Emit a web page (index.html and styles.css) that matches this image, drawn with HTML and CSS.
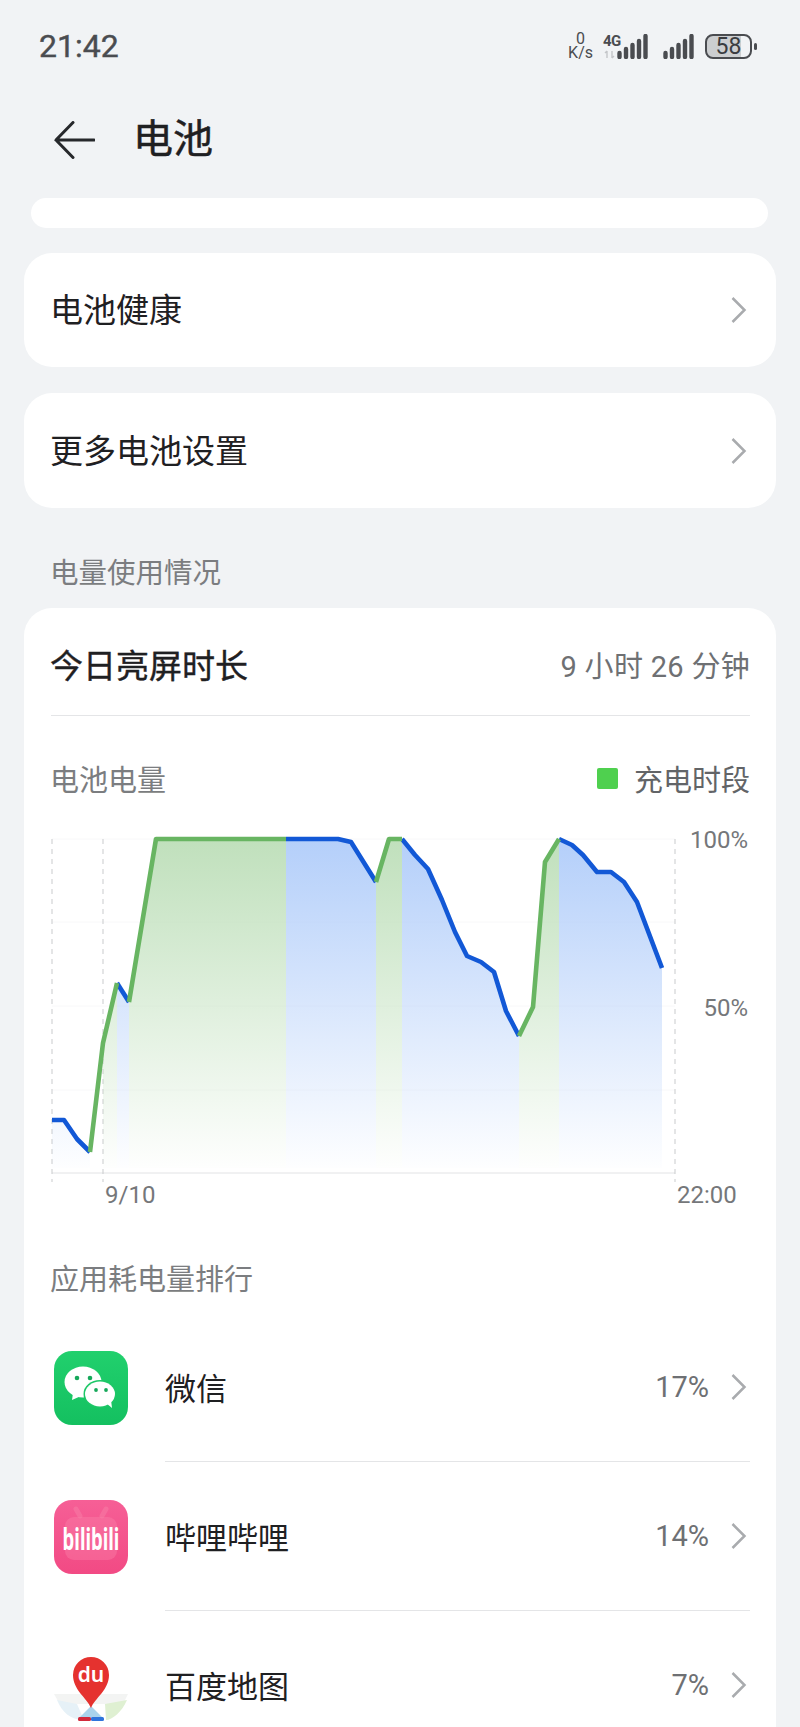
FILE: index.html
```html
<!DOCTYPE html>
<html lang="zh">

<head>
    <meta charset="utf-8">
    <title>电池</title>
    <link rel="stylesheet" href="styles.css">
</head>

<body>
    <div class="status">
        <span class="time">21:42</span>
        <div class="indicators">
            <div class="speed"><span>0</span><span>K/s</span></div>
            <div class="sim">
                <span class="sim-type">4G</span>
                <svg class="sim-arrows" width="13" height="9" viewBox="0 0 13 9">
                    <path d="M4 1v7M2 3l2-2M9 1v7M11 6l-2 2" stroke="#c4c6c9" stroke-width="1.4" fill="none" />
                </svg>
            </div>
            <svg class="bars" width="31" height="25" viewBox="0 0 31 25">
                <path d="M2.500 19v4M9 15v8M15.500 11v12M22 7v16M28.500 2v21" stroke="#4a4c50" stroke-width="4.400" stroke-linecap="round" />
            </svg>
            <svg class="bars bars-gap" width="31" height="25" viewBox="0 0 31 25">
                <path d="M2.500 19v4M9 15v8M15.500 11v12M22 7v16M28.500 2v21" stroke="#4a4c50" stroke-width="4.400" stroke-linecap="round" />
            </svg>
            <div class="battery"><span class="battery-level">58</span></div>
            <span class="battery-nub"></span>
        </div>
    </div>

    <div class="header">
        <svg class="back" width="42" height="38" viewBox="0 0 42 38">
            <path d="M20 1.500 3 19l17 17.500M3 19h38" stroke="#26282b" stroke-width="3" fill="none" stroke-linecap="round" />
        </svg>
        <h1>电池</h1>
    </div>

    <div class="sliver"></div>

    <div class="card link-card">
        <span>电池健康</span>
        <svg class="chevron" width="17" height="28" viewBox="0 0 17 28">
            <path d="M2.500 2 14.500 14 2.500 26" />
        </svg>
    </div>
    <div class="card link-card">
        <span>更多电池设置</span>
        <svg class="chevron" width="17" height="28" viewBox="0 0 17 28">
            <path d="M2.500 2 14.500 14 2.500 26" />
        </svg>
    </div>

    <div class="section-label">电量使用情况</div>

    <div class="card usage">
        <div class="screen-time">
            <span class="screen-title">今日亮屏时长</span>
            <span class="screen-value">9 小时 26 分钟</span>
        </div>

        <div class="chart-head">
            <span>电池电量</span>
            <span class="legend"><i class="legend-dot"></i>充电时段</span>
        </div>

        <svg class="chart" width="699" height="385" viewBox="51 830 699 385">
            <defs>
                <linearGradient id="fill-blue" gradientUnits="userSpaceOnUse" x1="0" y1="839" x2="0" y2="1168">
                    <stop offset="0" stop-color="#b4cffa" />
                    <stop offset="1" stop-color="#b4cffa" stop-opacity="0.02" />
                </linearGradient>
                <linearGradient id="fill-green" gradientUnits="userSpaceOnUse" x1="0" y1="839" x2="0" y2="1168">
                    <stop offset="0" stop-color="#c0e0bc" />
                    <stop offset="1" stop-color="#c0e0bc" stop-opacity="0.02" />
                </linearGradient>
            </defs>

            <g class="grid">
                <path d="M52 839H675M52 922H675M52 1006H675M52 1090H675" />
            </g>
            <path class="axis" d="M52 1173H675" />
            <path class="dash" d="M52 839V1182M103 839V1182M675 839V1182" />

            <g fill="url(#fill-blue)">
                <polygon points="52,1120 64,1120 77,1139 90,1152 90,1168 52,1168" />
                <polygon points="117,983 129,1002 129,1168 117,1168" />
                <polygon points="286,839 338,839 351,842 376,882 376,1168 286,1168" />
                <polygon points="402,839 415,855 428,869 442,900 455,932 467,956 481,962 494,972 506,1011 519,1036 519,1168 402,1168" />
                <polygon points="559,839 572,845 583,855 597,872 611,872 624,882 637,902 662,968 662,1168 559,1168" />
            </g>
            <g fill="url(#fill-green)">
                <polygon points="103,1043 117,983 117,1168 103,1168" />
                <polygon points="129,1002 156,839 286,839 286,1168 129,1168" />
                <polygon points="376,882 389,839 402,839 402,1168 376,1168" />
                <polygon points="519,1036 533,1007 545,862 559,839 559,1168 519,1168" />
            </g>

            <g class="line line-blue">
                <polyline points="52,1120 64,1120 77,1139 90,1152" />
                <polyline points="117,983 129,1002" />
                <polyline points="286,839 338,839 351,842 376,882" />
                <polyline points="402,839 415,855 428,869 442,900 455,932 467,956 481,962 494,972 506,1011 519,1036" />
                <polyline points="559,839 572,845 583,855 597,872 611,872 624,882 637,902 662,968" />
            </g>
            <g class="line line-green">
                <polyline points="90,1152 103,1043 117,983" />
                <polyline points="129,1002 156,839 286,839" />
                <polyline points="376,882 389,839 402,839" />
                <polyline points="519,1036 533,1007 545,862 559,839" />
            </g>

            <g class="chart-text">
                <text x="748" y="848" text-anchor="end">100%</text>
                <text x="748" y="1016" text-anchor="end">50%</text>
                <text x="105" y="1203">9/10</text>
                <text x="677" y="1203">22:00</text>
            </g>
        </svg>

        <div class="rank-label">应用耗电量排行</div>

        <div class="apps">
            <div class="app">
                <svg class="app-icon" width="74" height="74" viewBox="0 0 74 74">
                    <defs>
                        <linearGradient id="wechat-bg" x1="0" y1="0" x2="0" y2="1">
                            <stop offset="0" stop-color="#21d06d" />
                            <stop offset="1" stop-color="#14c060" />
                        </linearGradient>
                    </defs>
                    <rect width="74" height="74" rx="18" fill="url(#wechat-bg)" />
                    <ellipse cx="29" cy="31" rx="18.500" ry="15.500" fill="#fff" />
                    <path d="M19 42 18 49 27 45Z" fill="#fff" />
                    <ellipse cx="46" cy="43" rx="16.500" ry="14" fill="#1cc766" />
                    <ellipse cx="46" cy="43" rx="15" ry="12.500" fill="#fff" />
                    <path d="M52 52 58 57 57 49Z" fill="#fff" />
                    <circle cx="23" cy="27" r="2.300" fill="#16a85a" />
                    <circle cx="36" cy="27" r="2.300" fill="#16a85a" />
                    <circle cx="42" cy="39" r="1.900" fill="#16a85a" />
                    <circle cx="52" cy="39" r="1.900" fill="#16a85a" />
                </svg>
                <div class="app-body">
                    <span class="app-name">微信</span>
                    <span class="app-share">17%</span>
                    <svg class="chevron" width="17" height="28" viewBox="0 0 17 28">
                        <path d="M2.500 2 14.500 14 2.500 26" />
                    </svg>
                </div>
            </div>
            <div class="app">
                <svg class="app-icon" width="74" height="74" viewBox="0 0 74 74">
                    <defs>
                        <linearGradient id="bili-bg" x1="0" y1="0" x2="0" y2="1">
                            <stop offset="0" stop-color="#f65f96" />
                            <stop offset="1" stop-color="#f24a84" />
                        </linearGradient>
                    </defs>
                    <rect width="74" height="74" rx="18" fill="url(#bili-bg)" />
                    <rect x="11" y="17" width="52" height="43" rx="9" fill="#f983aa" opacity="0.4" />
                    <path d="M26 16 22 9M48 16 52 9" stroke="#f983aa" stroke-width="5" opacity="0.45" stroke-linecap="round" />
                    <text class="bili-text" transform="translate(37 50) scale(0.6 1)" text-anchor="middle">bilibili</text>
                </svg>
                <div class="app-body">
                    <span class="app-name">哔哩哔哩</span>
                    <span class="app-share">14%</span>
                    <svg class="chevron" width="17" height="28" viewBox="0 0 17 28">
                        <path d="M2.500 2 14.500 14 2.500 26" />
                    </svg>
                </div>
            </div>
            <div class="app">
                <svg class="app-icon" width="74" height="74" viewBox="0 0 74 74">
                    <path d="M0 46H74L67 60 50 56H24L8 60Z" fill="#f3f4f3" />
                    <path d="M3 52 23 56 30 72C16 72 8 64 3 52Z" fill="#e6f1f7" />
                    <path d="M51 56 73 52C68 64 58 72 52 72Z" fill="#dff0d2" />
                    <path d="M37 58 50 71H24Z" fill="#a9d3ec" />
                    <rect x="24" y="69" width="13" height="4" rx="1.500" fill="#d22a3c" />
                    <rect x="37" y="69" width="13" height="4" rx="1.500" fill="#2f74dc" />
                    <path d="M37 60C33 50 19 42 19 27a18 18 0 0 1 36 0C55 42 41 50 37 60Z" fill="#e5322f" />
                    <text class="du-text" x="37" y="34" text-anchor="middle">du</text>
                </svg>
                <div class="app-body">
                    <span class="app-name">百度地图</span>
                    <span class="app-share">7%</span>
                    <svg class="chevron" width="17" height="28" viewBox="0 0 17 28">
                        <path d="M2.500 2 14.500 14 2.500 26" />
                    </svg>
                </div>
            </div>
        </div>
    </div>
</body>

</html>
```
FILE: styles.css
```css
html,
body {
    margin: 0;
    padding: 0;
    background: #f1f3f5;
    height: 1727px;
    overflow: hidden;
    font-family: Roboto, "Noto Sans CJK SC", sans-serif;
    color: #1f2022;
}

.status {
    height: 92px;
    display: flex;
    align-items: center;
    justify-content: space-between;
    padding: 0 43px 0 39px;
}

.time {
    font-size: 32px;
    color: #4a4c50;
    -webkit-text-stroke: 0.4px #4a4c50;
}

.indicators {
    display: flex;
    align-items: center;
}

.speed {
    display: flex;
    flex-direction: column;
    align-items: center;
    font-size: 16px;
    line-height: 14px;
    color: #4a4c50;
    margin-right: 10px;
}

.sim {
    width: 14px;
    height: 25px;
    display: flex;
    flex-direction: column;
    color: #4a4c50;
}

.sim-type {
    font-size: 15px;
    font-weight: 700;
    line-height: 14px;
    white-space: nowrap;
    letter-spacing: -0.5px;
}

.sim-arrows {
    margin-top: 2px;
}

.bars-gap {
    margin-left: 15px;
}

.battery {
    margin-left: 11px;
    width: 47px;
    height: 25px;
    box-sizing: border-box;
    border: 2px solid #4a4c50;
    border-radius: 8px;
    background: linear-gradient(to right, #ccced0 78%, #f1f3f5 78%);
    display: flex;
    align-items: center;
    justify-content: center;
}

.battery-level {
    font-size: 23px;
    color: #3a3c40;
    line-height: 1;
}

.battery-nub {
    width: 3px;
    height: 7px;
    margin-left: 2px;
    border-radius: 2px;
    background: #4a4c50;
}

.header {
    height: 106px;
    display: flex;
    align-items: center;
    padding-left: 53px;
    box-sizing: border-box;
    padding-bottom: 10px;
}

.header h1 {
    margin: 0 0 0 38px;
    font-size: 40px;
    font-weight: 400;
    line-height: 1;
    -webkit-text-stroke: 0.5px #1f2022;
}

.sliver {
    height: 30px;
    margin: 0 32px 25px 31px;
    border-radius: 15px;
    background: #fff;
}

.card {
    margin: 0 24px;
    background: #fff;
    border-radius: 28px;
}

.link-card {
    height: 114px;
    margin-bottom: 26px;
    padding: 0 28px 4px 26px;
    box-sizing: border-box;
    display: flex;
    align-items: center;
    justify-content: space-between;
    font-size: 33px;
}

.link-card+.link-card {
    height: 115px;
    margin-bottom: 0;
}

.chevron {
    display: block;
    flex: none;
    margin-right: 3px;
}

.chevron path {
    fill: none;
    stroke: #a9abae;
    stroke-width: 2.500;
}

.link-card .chevron {
    margin: 4px 1px 0 0;
}

.section-label {
    height: 100px;
    padding: 43px 0 0 50px;
    box-sizing: border-box;
    font-size: 28.500px;
    line-height: 46px;
    color: #7b7d80;
}

.usage {
    height: 1200px;
    padding: 0 26px 0 27px;
    border-bottom-left-radius: 0;
    border-bottom-right-radius: 0;
}

.screen-time {
    height: 108px;
    padding-top: 4px;
    box-sizing: border-box;
    display: flex;
    align-items: center;
    justify-content: space-between;
    border-bottom: 1px solid #e4e5e7;
}

.screen-title {
    font-size: 33px;
    margin-left: -1px;
    -webkit-text-stroke: 0.4px #1f2022;
}

.screen-value {
    font-size: 29px;
    color: #6e7073;
    letter-spacing: 0.3px;
}

.chart-head {
    margin: 39px 0 29px;
    height: 46px;
    display: flex;
    align-items: center;
    justify-content: space-between;
    font-size: 29px;
    color: #7b7d80;
}

.chart-head>span:first-child {
    margin-left: -1px;
}

.legend {
    display: flex;
    align-items: center;
    color: #626467;
}

.legend-dot {
    width: 21px;
    height: 21px;
    margin-right: 16px;
    border-radius: 2px;
    background: #4fd04f;
}

.chart {
    display: block;
}

.grid path {
    stroke: #f8f8f9;
    stroke-width: 1;
    fill: none;
}

.axis {
    stroke: #e2e3e5;
    stroke-width: 1;
    fill: none;
}

.dash {
    stroke: #c9cbcd;
    stroke-width: 1;
    stroke-dasharray: 5 5;
    fill: none;
}

.line polyline {
    fill: none;
    stroke-width: 4.600;
    stroke-linejoin: round;
}

.line-blue polyline {
    stroke: #1258d6;
}

.line-green polyline {
    stroke: #68b562;
}

.chart-text text {
    font-size: 24px;
    fill: #75777a;
}

.rank-label {
    margin-top: 42px;
    height: 46px;
    font-size: 29px;
    line-height: 46px;
    color: #7b7d80;
    margin-left: -1px;
}

.apps {
    margin-top: 10px;
}

.app {
    display: flex;
    align-items: center;
    margin-left: 3px;
}

.app-icon {
    flex: none;
    margin-right: 37px;
}

.app-body {
    flex: 1;
    height: 148px;
    display: flex;
    align-items: center;
    border-bottom: 1px solid #e4e5e7;
}

.app:last-child .app-body {
    border-bottom: none;
}

.app-name {
    flex: 1;
    font-size: 31px;
    padding-bottom: 2px;
}

.app-share {
    font-size: 29px;
    color: #6e7073;
    margin-right: 21px;
}

.bili-text {
    font-family: "Noto Sans", sans-serif;
    font-size: 31px;
    font-weight: 700;
    fill: #fff;
}

.du-text {
    font-family: "Noto Sans", sans-serif;
    font-size: 21px;
    font-weight: 600;
    fill: #fff;
}
```
